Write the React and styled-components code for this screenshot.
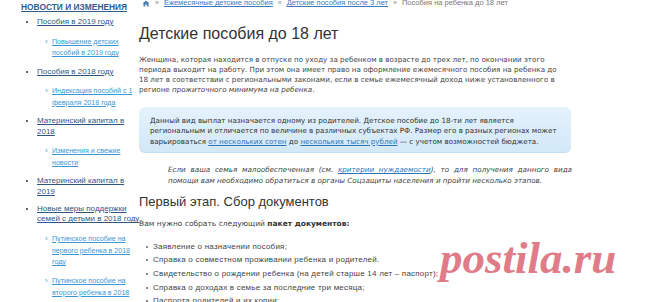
import React from "react";
import styled, { createGlobalStyle } from "styled-components";

const Global = createGlobalStyle`
  html, body { margin: 0; padding: 0; background: #fff; overflow: hidden; }
  body { font-family: "Liberation Sans", Arial, sans-serif; color: #333; }
  #root { width: 660px; height: 302px; overflow: hidden; position: relative; }
`;

const Page = styled.div`
  display: flex;
  align-items: flex-start;
  width: 660px;
  height: 302px;
  position: relative;
`;

const Sidebar = styled.aside`
  width: 109px;
  flex: 0 0 109px;
  padding: 2px 0 0 21px;
  font-family: "Liberation Sans", Arial, sans-serif;
`;

const SideTitle = styled.a`
  display: block;
  font-size: 8.4px;
  line-height: 11px;
  font-weight: bold;
  color: #2f5e8e;
  text-decoration: underline;
  white-space: nowrap;
  text-transform: uppercase;
`;

const SideList = styled.ul`
  margin: 4px 0 0 0;
  padding: 0 0 0 16px;
  list-style: disc;
`;

const SideItem = styled.li`
  font-size: 8px;
  line-height: 10.5px;
  color: #2f5680;
  margin-bottom: 6.5px;
  white-space: nowrap;
  &::marker { color: #333; font-size: 8px; }
  > a { color: #2f5680; text-decoration: underline; }
`;

const SubList = styled.ul`
  margin: 8px 0 0 0;
  padding: 0 0 0 15px;
  list-style-type: "›  ";
`;

const SubItem = styled.li`
  font-size: 7.1px;
  line-height: 11.8px;
  margin-bottom: 6px;
  white-space: nowrap;
  &::marker { color: #3b97d6; font-size: 8px; }
  > a { color: #3b97d6; text-decoration: underline; }
`;

const Main = styled.main`
  width: 432px;
  padding-left: 9px;
  font-family: "DejaVu Sans", Verdana, sans-serif;
`;

const Crumbs = styled.nav`
  display: flex;
  align-items: center;
  margin-top: -2px;
  height: 10px;
  font-family: "Liberation Sans", Arial, sans-serif;
  font-size: 7.5px;
  line-height: 10px;
  white-space: nowrap;
`;

const CrumbLink = styled.a`
  color: #3b79bd;
  text-decoration: underline;
`;

const CrumbSep = styled.span`
  color: #888;
  font-size: 7px;
  margin: 0 5px;
`;

const CrumbCurrent = styled.span`
  color: #777;
`;

const Title = styled.h1`
  margin: 16px 0 0 0;
  font-family: "Liberation Sans", Arial, sans-serif;
  font-weight: normal;
  font-size: 16px;
  line-height: 20px;
  color: #333;
`;

const Para = styled.p`
  margin: 11px 0 0 0;
  font-size: 7.15px;
  line-height: 10px;
  color: #444;
  white-space: nowrap;
  em { font-style: italic; }
`;

const InfoBox = styled.div`
  margin-top: 11.5px;
  height: 46px;
  box-sizing: border-box;
  padding: 9px 10px 6px 11px;
  border-radius: 6px;
  background: linear-gradient(#e4f2fc, #d3e8f8);
  border-bottom: 1px solid #c3def3;
  font-size: 7.15px;
  line-height: 10.5px;
  color: #333;
  white-space: nowrap;
  a { color: #2b74b8; text-decoration: underline; }
`;

const Quote = styled.div`
  margin: 11.5px 0 0 29px;
  width: 404px;
  font-size: 7.2px;
  line-height: 11px;
  font-style: italic;
  color: #444;
  a { color: #2b74b8; text-decoration: underline; }
`;

const QuoteLine = styled.span`
  display: block;
  white-space: ${(p) => (p.$justify ? "normal" : "nowrap")};
  text-align: ${(p) => (p.$justify ? "justify" : "left")};
  text-align-last: ${(p) => (p.$justify ? "justify" : "auto")};
`;

const H2 = styled.h2`
  margin: 7.5px 0 0 0;
  font-family: "Liberation Sans", Arial, sans-serif;
  font-weight: normal;
  font-size: 13px;
  line-height: 16px;
  color: #333;
`;

const Lead = styled.p`
  margin: 8px 0 0 0;
  font-size: 7.5px;
  line-height: 12px;
  color: #444;
  b { font-weight: bold; color: #333; }
`;

const DocList = styled.ul`
  margin: 10px 0 0 0;
  padding: 0 0 0 14px;
  list-style: none;
`;

const DocItem = styled.li`
  position: relative;
  font-family: "Liberation Sans", Arial, sans-serif;
  font-size: 8px;
  letter-spacing: 0.22px;
  line-height: 13.7px;
  color: #444;
  white-space: nowrap;
  &::before {
    content: "";
    position: absolute;
    left: -7px;
    top: 6px;
    width: 2px;
    height: 2px;
    background: #888;
  }
`;

const Watermark = styled.div`
  position: absolute;
  left: 440px;
  top: 228px;
  font-family: "Liberation Serif", "Times New Roman", serif;
  font-style: italic;
  font-weight: bold;
  font-size: 45px;
  line-height: 60px;
  color: #e07c88;
  pointer-events: none;
`;

const HomeIcon = () => (
  <svg width="8" height="7" viewBox="0 0 8 7" style={{ marginLeft: 3 }}>
    <path d="M4 0.5 L0.5 3.6 H1.5 V6.5 H3.2 V4.6 H4.8 V6.5 H6.5 V3.6 H7.5 Z" fill="#4a7fb5" />
  </svg>
);

export default function App() {
  return (
    <>
      <Global />
      <Page>
        <Sidebar>
          <SideTitle>Новости и изменения</SideTitle>
          <SideList>
            <SideItem>
              <a>Пособия в 2019 году</a>
              <SubList>
                <SubItem>
                  <a>Повышение детских<br />пособий в 2019 году</a>
                </SubItem>
              </SubList>
            </SideItem>
            <SideItem>
              <a>Пособия в 2018 году</a>
              <SubList>
                <SubItem>
                  <a>Индексация пособий с 1<br />февраля 2018 года</a>
                </SubItem>
              </SubList>
            </SideItem>
            <SideItem>
              <a>Материнский капитал в<br />2018</a>
              <SubList>
                <SubItem>
                  <a>Изменения и свежие<br />новости</a>
                </SubItem>
              </SubList>
            </SideItem>
            <SideItem>
              <a>Материнский капитал в<br />2019</a>
            </SideItem>
            <SideItem>
              <a>Новые меры поддержки<br />семей с детьми в 2018 году</a>
              <SubList>
                <SubItem>
                  <a>Путинское пособие на<br />первого ребенка в 2018<br />году</a>
                </SubItem>
                <SubItem>
                  <a>Путинское пособие на<br />второго ребенка в 2018<br />году</a>
                </SubItem>
              </SubList>
            </SideItem>
          </SideList>
        </Sidebar>
        <Main>
          <Crumbs>
            <HomeIcon />
            <CrumbSep>»</CrumbSep>
            <CrumbLink>Ежемесячные детские пособия</CrumbLink>
            <CrumbSep>»</CrumbSep>
            <CrumbLink>Детские пособия после 3 лет</CrumbLink>
            <CrumbSep>»</CrumbSep>
            <CrumbCurrent>Пособия на ребенка до 18 лет</CrumbCurrent>
          </Crumbs>
          <Title>Детские пособия до 18 лет</Title>
          <Para>
            Женщина, которая находится в отпуске по уходу за ребенком в возрасте до трех лет, по окончании этого<br />
            периода выходит на работу. При этом она имеет право на оформление ежемесячного пособия на ребенка до<br />
            18 лет в соответствии с региональными законами, если в семье ежемесячный доход ниже установленного в<br />
            регионе <em>прожиточного минимума на ребенка</em>.
          </Para>
          <InfoBox>
            Данный вид выплат назначается одному из родителей. Детское пособие до 18-ти лет является<br />
            региональным и отличается по величине в различных субъектах РФ. Размер его в разных регионах может<br />
            варьироваться <a>от нескольких сотен</a> до <a>нескольких тысяч рублей</a> — с учетом возможностей бюджета.
          </InfoBox>
          <Quote>
            <QuoteLine $justify>
              Если ваша семья малообеспеченная (см. <a>критерии нуждаемости</a>), то для получения данного вида
            </QuoteLine>
            <QuoteLine>
              помощи вам необходимо обратиться в органы Соцзащиты населения и пройти несколько этапов.
            </QuoteLine>
          </Quote>
          <H2>Первый этап. Сбор документов</H2>
          <Lead>
            Вам нужно собрать следующий <b>пакет документов:</b>
          </Lead>
          <DocList>
            <DocItem>Заявление о назначении пособия;</DocItem>
            <DocItem>Справка о совместном проживании ребенка и родителей.</DocItem>
            <DocItem>Свидетельство о рождении ребенка (на детей старше 14 лет – паспорт);</DocItem>
            <DocItem>Справка о доходах в семье за последние три месяца;</DocItem>
            <DocItem>Паспорта родителей и их копии;</DocItem>
          </DocList>
        </Main>
        <Watermark>postila.ru</Watermark>
      </Page>
    </>
  );
}
